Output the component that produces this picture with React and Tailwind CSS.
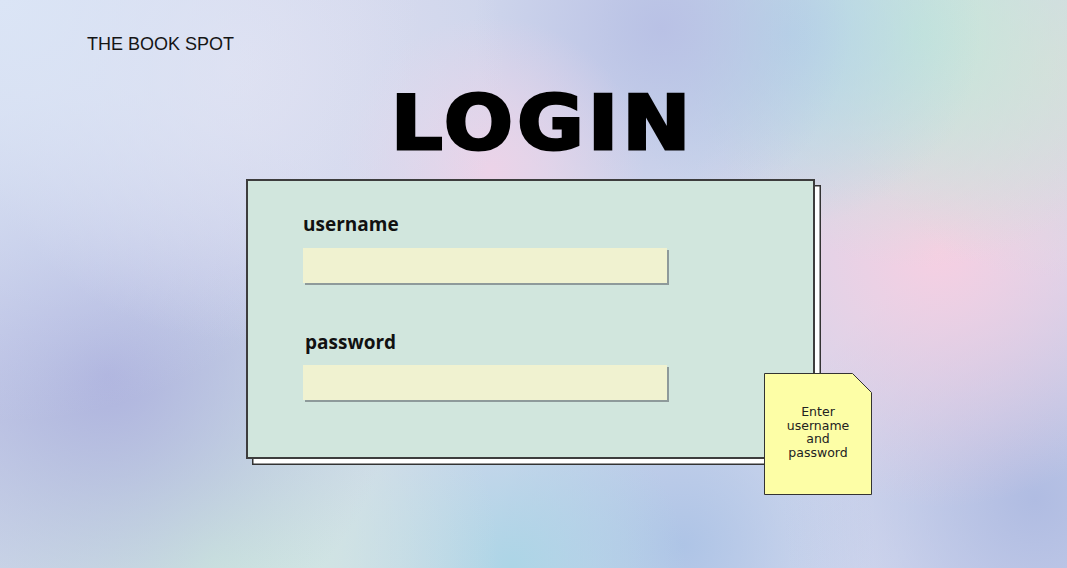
import React from "react";

// sticky note with the folded corner
const Note = () => (
  <div className="absolute left-[516px] top-[192px] h-[122px] w-[108px]">
    <svg width="108" height="122" viewBox="0 0 108 122" className="absolute left-0 top-0">
      <polygon points="0.5,0.5 88.5,0.5 107.5,19.5 107.5,121.5 0.5,121.5" fill="#fdfea6" stroke="#333" strokeWidth="1" />
    </svg>
    <p className="relative pt-[32px] text-center font-['DejaVu_Sans',sans-serif] text-[12.5px] leading-[13.5px] text-[#222]">
      Enter
      <br />
      username
      <br />
      and
      <br />
      password
    </p>
  </div>
);

const Field = ({ label, labelClass, inputClass }) => (
  <div>
    <label className={`block font-['Open_Sans',sans-serif] text-[19px] font-bold leading-[24px] text-[#111] ${labelClass}`}>
      {label}
    </label>
    <input
      type={label === "password" ? "password" : "text"}
      className={`block h-[35px] w-[364px] bg-[#f0f2d0] shadow-[2px_2px_0_0_#8e9a9a] outline-none ${inputClass}`}
    />
  </div>
);

export default function App() {
  return (
    <div className="relative h-[568px] w-[1067px] overflow-hidden bg-[#cfd6ec] bg-[radial-gradient(circle_at_0%_0%,#dbe5f6_0%,transparent_35%),radial-gradient(circle_at_22%_12%,#e0dff0_0%,transparent_28%),radial-gradient(circle_at_46%_30%,#ecd3e8_0%,transparent_22%),radial-gradient(circle_at_62%_5%,#b9c1e5_0%,transparent_22%),radial-gradient(circle_at_74%_6%,#b5d5e7_0%,transparent_20%),radial-gradient(circle_at_86%_6%,#c6e7d9_0%,transparent_22%),radial-gradient(circle_at_98%_12%,#dcdcdc_0%,transparent_18%),radial-gradient(circle_at_88%_44%,#f6cfe2_0%,transparent_26%),radial-gradient(circle_at_97%_88%,#b0bce2_0%,transparent_22%),radial-gradient(circle_at_10%_66%,#aeb3de_0%,transparent_28%),radial-gradient(circle_at_20%_98%,#d0ecde_0%,transparent_28%),radial-gradient(circle_at_48%_100%,#acd5e6_0%,transparent_22%),radial-gradient(circle_at_64%_96%,#aec4e6_0%,transparent_22%),radial-gradient(circle_at_84%_98%,#d8ddf0_0%,transparent_20%)]">
      <div className="pl-[87px] pt-[34px] font-['Liberation_Sans',sans-serif] text-[18px] leading-[20px] text-[#151515]">
        THE BOOK SPOT
      </div>

      <h1 className="mt-[29px] ml-[391px] w-max origin-left scale-x-[1.08] font-['DejaVu_Sans',sans-serif] text-[75px] font-bold leading-[80px] tracking-[4px] text-black [-webkit-text-stroke:3px_black]">
        LOGIN
      </h1>

      <div className="relative ml-[246px] mt-[16px] h-[280px] w-[569px] border-2 border-[#3d3d3d] bg-[#d1e6dd] pl-[55px] pt-[31px] shadow-[6px_6px_0_-1.5px_#fff,6px_6px_0_0_#333]">
        <Field label="username" labelClass="" inputClass="mt-[12px]" />
        <div className="mt-[47px]">
          <Field label="password" labelClass="pl-[2px]" inputClass="mt-[11px]" />
        </div>
        <Note />
      </div>
    </div>
  );
}
